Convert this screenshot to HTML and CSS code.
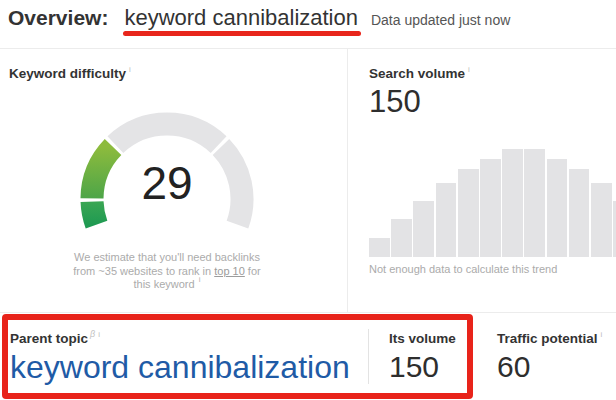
FILE: index.html
```html
<!DOCTYPE html>
<html lang="en">
<head>
<meta charset="utf-8">
<title>Overview: keyword cannibalization</title>
<link rel="stylesheet" href="styles.css">
</head>
<body>
<header class="topbar">
  <h1 class="title">Overview:</h1>
  <span class="keyword">keyword cannibalization</span>
  <span class="updated">Data updated just now</span>
</header>

<section class="cards">
  <div class="card kd">
    <h2 class="label">Keyword difficulty<sup class="info">i</sup></h2>
    <div class="gauge">
      <svg class="gauge-svg" width="180" height="124" viewBox="0 0 180 124">
        <defs>
          <linearGradient id="g1" x1="0" y1="1" x2="0" y2="0">
            <stop offset="0" stop-color="#1f9a52"/>
            <stop offset="1" stop-color="#3aa653"/>
          </linearGradient>
          <linearGradient id="g2" x1="0" y1="1" x2="0" y2="0">
            <stop offset="0" stop-color="#4da548"/>
            <stop offset="1" stop-color="#8dbb3d"/>
          </linearGradient>
        </defs>
        <g fill="none" stroke-width="23">
          <path d="M19.52 116.65 A75 75 0 0 1 15.05 93.62" stroke="url(#g1)"/>
          <path d="M15.00 90.35 A75 75 0 0 1 36.05 38.90" stroke="url(#g2)"/>
          <path d="M38.37 36.60 A75 75 0 0 1 141.63 36.60" stroke="#e4e4e6"/>
          <path d="M143.95 38.90 A75 75 0 0 1 160.48 116.65" stroke="#e4e4e6"/>
        </g>
      </svg>
      <div class="gauge-value">29</div>
    </div>
    <p class="note">We estimate that you'll need backlinks<br>from ~35 websites to rank in <span class="link">top 10</span> for<br>this keyword <sup class="info">i</sup></p>
  </div>

  <div class="card sv">
    <h2 class="label">Search volume<sup class="info">i</sup></h2>
    <div class="big">150</div>
    <div class="chart">
      <span class="bar" style="height:19px"></span>
      <span class="bar" style="height:38px"></span>
      <span class="bar" style="height:56px"></span>
      <span class="bar" style="height:74px"></span>
      <span class="bar" style="height:88px"></span>
      <span class="bar" style="height:98px"></span>
      <span class="bar" style="height:108px"></span>
      <span class="bar" style="height:108px"></span>
      <span class="bar" style="height:98px"></span>
      <span class="bar" style="height:88px"></span>
      <span class="bar" style="height:74px"></span>
      <span class="bar" style="height:56px"></span>
    </div>
    <p class="trend">Not enough data to calculate this trend</p>
  </div>
</section>

<section class="bottom">
  <div class="highlight">
    <div class="col parent">
      <h2 class="label">Parent topic<sup class="beta">β</sup><sup class="info">i</sup></h2>
      <a class="topic">keyword cannibalization</a>
    </div>
    <div class="col volume">
      <h2 class="label">Its volume</h2>
      <div class="big">150</div>
    </div>
  </div>
  <div class="col traffic">
    <h2 class="label">Traffic potential<sup class="info">i</sup></h2>
    <div class="big">60</div>
  </div>
</section>
</body>
</html>
```

FILE: styles.css
```css
* { box-sizing: border-box; }

html, body {
  margin: 0;
  padding: 0;
  background: #ffffff;
}

body {
  width: 616px;
  height: 400px;
  overflow: hidden;
  font-family: "Liberation Sans", Arial, Helvetica, sans-serif;
  color: #333;
}

/* Header */
.topbar {
  display: flex;
  align-items: baseline;
  height: 49px;
  padding: 6px 0 0 8px;
  border-bottom: 1px solid #ececec;
}

.title {
  margin: 0;
  font-size: 21px;
  line-height: 24px;
  font-weight: bold;
  color: #333;
}

.keyword {
  position: relative;
  margin-left: 16px;
  font-size: 22px;
  line-height: 24px;
  color: #333;
}

.keyword::after {
  content: "";
  position: absolute;
  left: -1px;
  right: -3px;
  bottom: -6px;
  height: 5px;
  border-radius: 3px;
  background: #e8261c;
}

.updated {
  margin-left: 13px;
  font-size: 14px;
  color: #555;
}

/* Cards row */
.cards {
  display: flex;
  height: 264px;
  border-bottom: 1px solid #ececec;
}

.card {
  padding-top: 17px;
}

.label {
  margin: 0;
  font-size: 13.5px;
  line-height: 16px;
  font-weight: bold;
  color: #333;
  white-space: nowrap;
}

.info {
  font-size: 8px;
  font-weight: normal;
  color: #bdbdbd;
  margin-left: 3px;
  vertical-align: 6px;
  line-height: 0;
}

.beta {
  font-size: 9px;
  font-style: italic;
  font-weight: normal;
  color: #c4c4c4;
  margin-left: 2px;
  vertical-align: 6px;
  line-height: 0;
}

.kd {
  width: 348px;
  flex: none;
  padding-left: 9px;
  padding-right: 22px;
  border-right: 1px solid #ececec;
}

.gauge {
  position: relative;
  width: 180px;
  height: 124px;
  margin: 26px auto 0;
}

.gauge-svg {
  display: block;
}

.gauge-value {
  position: absolute;
  left: 0;
  right: 0;
  top: 52px;
  text-align: center;
  font-size: 46px;
  line-height: 46px;
  color: #222;
}

.note {
  margin: 19px 0 0;
  font-size: 11px;
  line-height: 13.5px;
  text-align: center;
  color: #ababab;
}

.note .info {
  font-size: 8px;
  color: #b5b5b5;
  margin-left: 1px;
}

.link {
  color: #9c9c9c;
  text-decoration: underline;
}

.sv {
  flex: 1;
  min-width: 0;
  padding-left: 21px;
  overflow: hidden;
}

.big {
  margin-top: 3px;
  font-size: 31px;
  line-height: 34px;
  color: #2e2e2e;
}

.chart {
  display: flex;
  align-items: flex-end;
  gap: 1.4px;
  height: 108px;
  margin-top: 30px;
}

.bar {
  flex: none;
  width: 20.8px;
  background: #e3e3e5;
}

.trend {
  margin: 6px 0 0;
  font-size: 11px;
  line-height: 13px;
  color: #ababab;
  white-space: nowrap;
}

/* Bottom row */
.bottom {
  display: flex;
  align-items: flex-start;
  padding-top: 1px;
}

.highlight {
  display: flex;
  margin-left: 2px;
  width: 471px;
  height: 85px;
  border: 6px solid #e8231a;
  border-radius: 4px;
}

.parent {
  width: 360px;
  flex: none;
  padding: 11px 0 0 2px;
}

.topic {
  display: block;
  margin-top: 2px;
  font-size: 32px;
  line-height: 36px;
  color: #1f5ba6;
  white-space: nowrap;
}

.volume {
  flex: 1;
  margin: 9px 0;
  padding: 2px 0 0 20px;
  border-left: 1px solid #e3e3e3;
}

.volume .big,
.traffic .big {
  margin-top: 2px;
  font-size: 30px;
  line-height: 36px;
}

.traffic {
  margin-left: 24px;
  padding-top: 17px;
}
```
